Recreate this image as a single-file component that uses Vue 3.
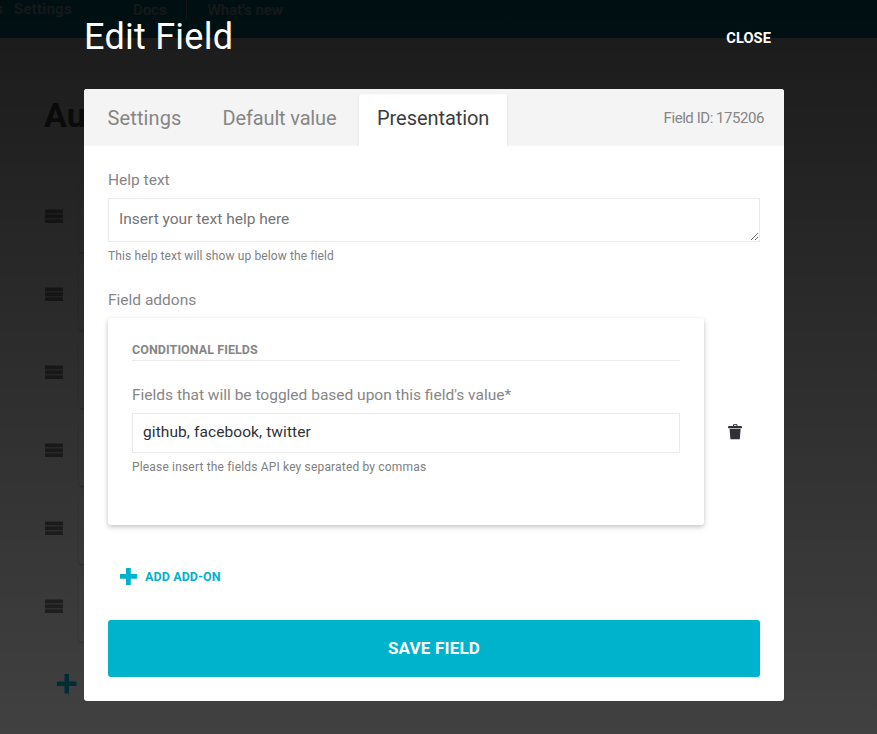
<script setup>
import { ref } from 'vue'

const rows = [1, 2, 3, 4, 5, 6]
const tabs = ['Settings', 'Default value', 'Presentation']
const active = ref('Presentation')
const help = ref('')
const keys = ref('github, facebook, twitter')
</script>

<template>
  <div class="screen">
    <div class="page">
      <header class="topbar">
        <div class="topbar-main"><span>s</span><span class="nav-settings">Settings</span></div>
        <span class="nav-docs">Docs</span>
        <span class="nav-news">What's new</span>
      </header>
      <h1 class="page-title">Au</h1>
      <div class="rows">
        <div v-for="r in rows" :key="r" class="row">
          <svg class="grip" width="18" height="15" viewBox="0 0 18 15">
            <path fill="#c0c0c0" d="M0 1h18v13H0z" />
            <path fill="#7c7c7c" d="M0 .5h18v3.500H0zM0 5.500h18v3.500H0zM0 10.500h18v3.500H0z" />
          </svg>
          <div class="row-card"></div>
        </div>
      </div>
      <svg class="page-plus" width="20" height="20" viewBox="0 0 20 20">
        <path fill="#00b0c8" d="M7.5 0h4.500v7.500H19.500v4.500H12v7.500H7.500V12H0V7.500h7.500z" />
      </svg>
    </div>

    <div class="overlay">
      <div class="modal-head">
        <h2 class="modal-title">Edit Field</h2>
        <button class="close">CLOSE</button>
      </div>
      <section class="modal">
        <nav class="tabs">
          <button
            v-for="t in tabs"
            :key="t"
            class="tab"
            :class="{ active: t === active }"
            @click="active = t"
          >{{ t }}</button>
          <span class="field-id">Field ID: 175206</span>
        </nav>
        <div class="body">
          <label class="label">Help text</label>
          <textarea v-model="help" class="control area" placeholder="Insert your text help here"></textarea>
          <p class="hint help-hint">This help text will show up below the field</p>

          <label class="label">Field addons</label>
          <div class="addon-row">
            <div class="addon">
              <h3 class="addon-title">CONDITIONAL FIELDS</h3>
              <label class="label">Fields that will be toggled based upon this field's value*</label>
              <input v-model="keys" class="control input" type="text" />
              <p class="hint">Please insert the fields API key separated by commas</p>
            </div>
            <svg class="trash" width="14" height="16" viewBox="0 0 14 16">
              <path fill="none" stroke="#2f3136" d="M5.500 2.200V.7h3.500v1.500" />
              <path fill="#2f3136" d="M.8 2h12.400l.8.8V4H0V2.800z" />
              <path fill="#b9babc" d="M.6 4h12.800v1H.6z" />
              <path fill="#2f3136" d="M1.600 5h11l-.8 10.200H2.400z" />
            </svg>
          </div>

          <button class="add">
            <svg width="17" height="17" viewBox="0 0 17 17">
              <path fill="#00b3cc" d="M6 0h4.800v6H17v4.800h-6.200V17H6v-6.200H0V6h6z" />
            </svg>
            <span>ADD ADD-ON</span>
          </button>
          <button class="save">SAVE FIELD</button>
        </div>
      </section>
    </div>
  </div>
</template>

<style>
body {
  margin: 0;
  overflow: hidden;
}
</style>

<style scoped>
.screen {
  position: relative;
  width: 877px;
  height: 734px;
  overflow: hidden;
  font-family: Roboto, "Liberation Sans", sans-serif;
  box-sizing: border-box;
}
.screen * {
  box-sizing: border-box;
}
h1, h2, h3, p {
  margin: 0;
}
button {
  font-family: inherit;
  border: 0;
  background: none;
  padding: 0;
}

.page {
  height: 734px;
  background: #f3f3f3;
}
.topbar {
  display: flex;
  height: 38px;
  background: #0090a8;
  color: #d6dcdc;
  font-size: 15px;
  font-weight: 500;
  line-height: 20px;
}
.topbar-main {
  display: flex;
  gap: 11px;
  width: 98px;
  margin-left: -5px;
  padding-right: 14px;
  border-right: 1px solid #009cb2;
  letter-spacing: 0.3px;
  line-height: 18px;
}
.nav-docs {
  height: 19px;
  margin-left: 40px;
  padding-right: 20px;
  border-right: 1px solid #c8c8c8;
  letter-spacing: -0.1px;
}
.nav-news {
  margin-left: 20px;
}
.page-title {
  height: 146px;
  padding: 56px 0 0 44px;
  font-size: 34px;
  line-height: 42px;
  color: #4c4c4c;
}
.rows {
  display: flex;
  flex-direction: column;
  gap: 10px;
  width: 780px;
}
.row {
  display: flex;
  height: 68px;
  padding-left: 45px;
}
.grip {
  margin: 25px 16px 0 0;
}
.row-card {
  flex: 1;
  border-radius: 3px;
  background: #f6f6f6;
  box-shadow: 0 1px 2px rgba(0, 0, 0, 0.25);
}
.page-plus {
  display: block;
  margin: 32px 0 0 57px;
}

.overlay {
  position: absolute;
  inset: 0;
  padding: 0 93px 0 84px;
  background: linear-gradient(rgba(0, 0, 0, 0.893), rgba(0, 0, 0, 0.732));
}
.modal-head {
  display: flex;
  justify-content: space-between;
  height: 89px;
  color: #fff;
}
.modal-title {
  padding-top: 16px;
  font-size: 36px;
  font-weight: 400;
  line-height: 42px;
  letter-spacing: 0.25px;
}
.close {
  height: 20px;
  margin: 28px 13px 0 0;
  color: #fff;
  font-size: 14.6px;
  font-weight: 700;
  line-height: 20px;
  letter-spacing: 0.1px;
}
.modal {
  width: 700px;
  height: 612px;
  border-radius: 3px;
  background: #fff;
  overflow: hidden;
}
.tabs {
  display: flex;
  gap: 4px;
  height: 57px;
  padding: 5px 20px 0 5px;
  background: #f4f4f4;
  overflow: hidden;
}
.tab {
  height: 52px;
  padding: 0 18px 4px;
  border-radius: 3px 3px 0 0;
  color: #868686;
  font-size: 20px;
  white-space: nowrap;
}
.tab:nth-child(1) {
  width: 111px;
  letter-spacing: 0.1px;
}
.tab:nth-child(2) {
  width: 151px;
  letter-spacing: -0.16px;
}
.tab:nth-child(3) {
  width: 148px;
  letter-spacing: -0.06px;
}
.tab.active {
  background: #fff;
  color: #3b3c40;
  box-shadow: 0 1px 3px rgba(0, 0, 0, 0.1);
}
.field-id {
  margin-left: auto;
  padding-top: 14px;
  color: #868686;
  font-size: 15px;
  line-height: 20px;
  letter-spacing: -0.45px;
}
.body {
  display: flex;
  flex-direction: column;
  align-items: flex-start;
  padding: 24px;
}
.label {
  display: block;
  height: 28px;
  color: #868686;
  font-size: 15.5px;
  line-height: 20px;
  white-space: nowrap;
}
.control {
  display: block;
  width: 100%;
  margin: 0;
  border: 1px solid #ebebeb;
  border-radius: 0;
  background: #fff;
  color: #2f3136;
  font-family: inherit;
  font-size: 15.5px;
  letter-spacing: 0.09px;
  outline: none;
}
.area {
  height: 44px;
  padding: 10px;
  line-height: 20px;
  letter-spacing: 0;
  overflow: hidden;
  resize: vertical;
}
.area::placeholder {
  color: #757575;
}
.input {
  height: 40px;
  padding: 0 10px 2px;
}
.hint {
  margin-top: 6px;
  color: #808080;
  font-size: 12px;
  line-height: 16px;
  letter-spacing: 0.17px;
}
.help-hint {
  height: 42px;
  letter-spacing: 0.11px;
}
.addon-row {
  display: flex;
  align-items: flex-start;
  gap: 24px;
}
.addon {
  width: 596px;
  height: 207px;
  padding: 22px 24px 0;
  border-radius: 3px;
  background: #fff;
  box-shadow: 0 2px 5px rgba(0, 0, 0, 0.24);
}
.addon-title {
  height: 21px;
  margin-bottom: 24px;
  border-bottom: 1px solid #ebebeb;
  color: #868686;
  font-size: 12.5px;
  line-height: 20px;
  letter-spacing: 0.07px;
}
.trash {
  margin-top: 106px;
}
.add {
  display: flex;
  align-items: center;
  gap: 8px;
  height: 17px;
  margin: 43px 0 0 12px;
  color: #00b3cc;
  font-size: 12.5px;
  font-weight: 700;
  letter-spacing: 0.1px;
}
.save {
  width: 652px;
  height: 57px;
  margin-top: 35px;
  padding-bottom: 2px;
  border-radius: 3px;
  background: #00b3cc;
  color: #fff;
  font-size: 17px;
  font-weight: 700;
  letter-spacing: 0.2px;
}
</style>
